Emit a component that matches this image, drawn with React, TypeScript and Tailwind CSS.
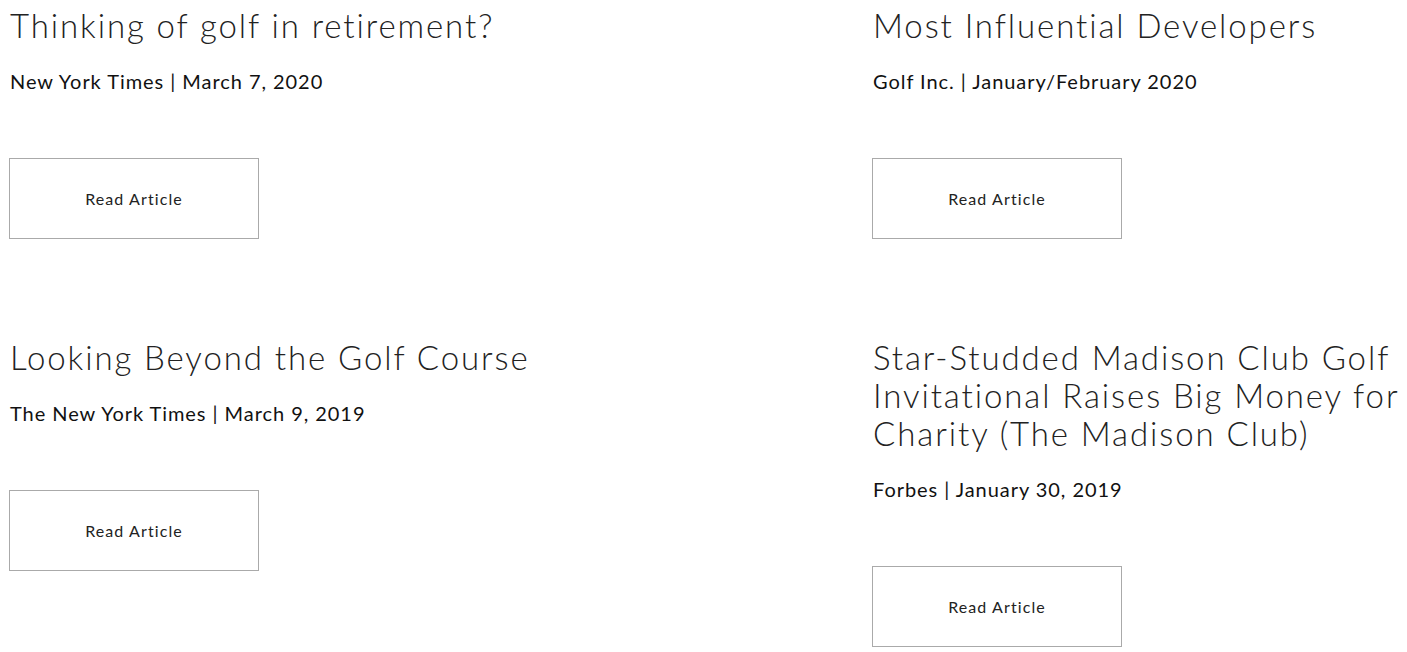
const articles = [
  {
    title: "Thinking of golf in retirement?",
    source: "New York Times | March 7, 2020",
  },
  {
    title: "Most Influential Developers",
    source: "Golf Inc. | January/February 2020",
  },
  {
    title: "Looking Beyond the Golf Course",
    source: "The New York Times | March 9, 2019",
  },
  {
    title: "Star-Studded Madison Club Golf Invitational Raises Big Money for Charity (The Madison Club)",
    source: "Forbes | January 30, 2019",
  },
]

const ArticleCard = ({ title, source }: { title: string; source: string }) => (
  <div className="flex flex-col items-start">
    <h2 className="text-[33px] leading-[38px] font-light text-[#222] tracking-[1.9px] pl-px">{title}</h2>
    <p className="mt-[23px] text-[20px] leading-[28px] text-[#111] tracking-[0.95px] pl-px">{source}</p>
    <a
      href="#"
      className="mt-[63px] w-[250px] h-[81px] flex items-center justify-center border border-[#aaa] text-[16px] tracking-[1.1px] text-[#222]"
    >
      Read Article
    </a>
  </div>
)

export default function App() {
  return (
    <div className="w-[1407px] h-[652px] overflow-hidden bg-white font-['Lato',sans-serif]">
      <div className="grid grid-cols-[863px_545px] gap-y-[99px] pl-[9px] pt-[6px]">
        {articles.map((a) => (
          <ArticleCard key={a.title} title={a.title} source={a.source} />
        ))}
      </div>
    </div>
  )
}
